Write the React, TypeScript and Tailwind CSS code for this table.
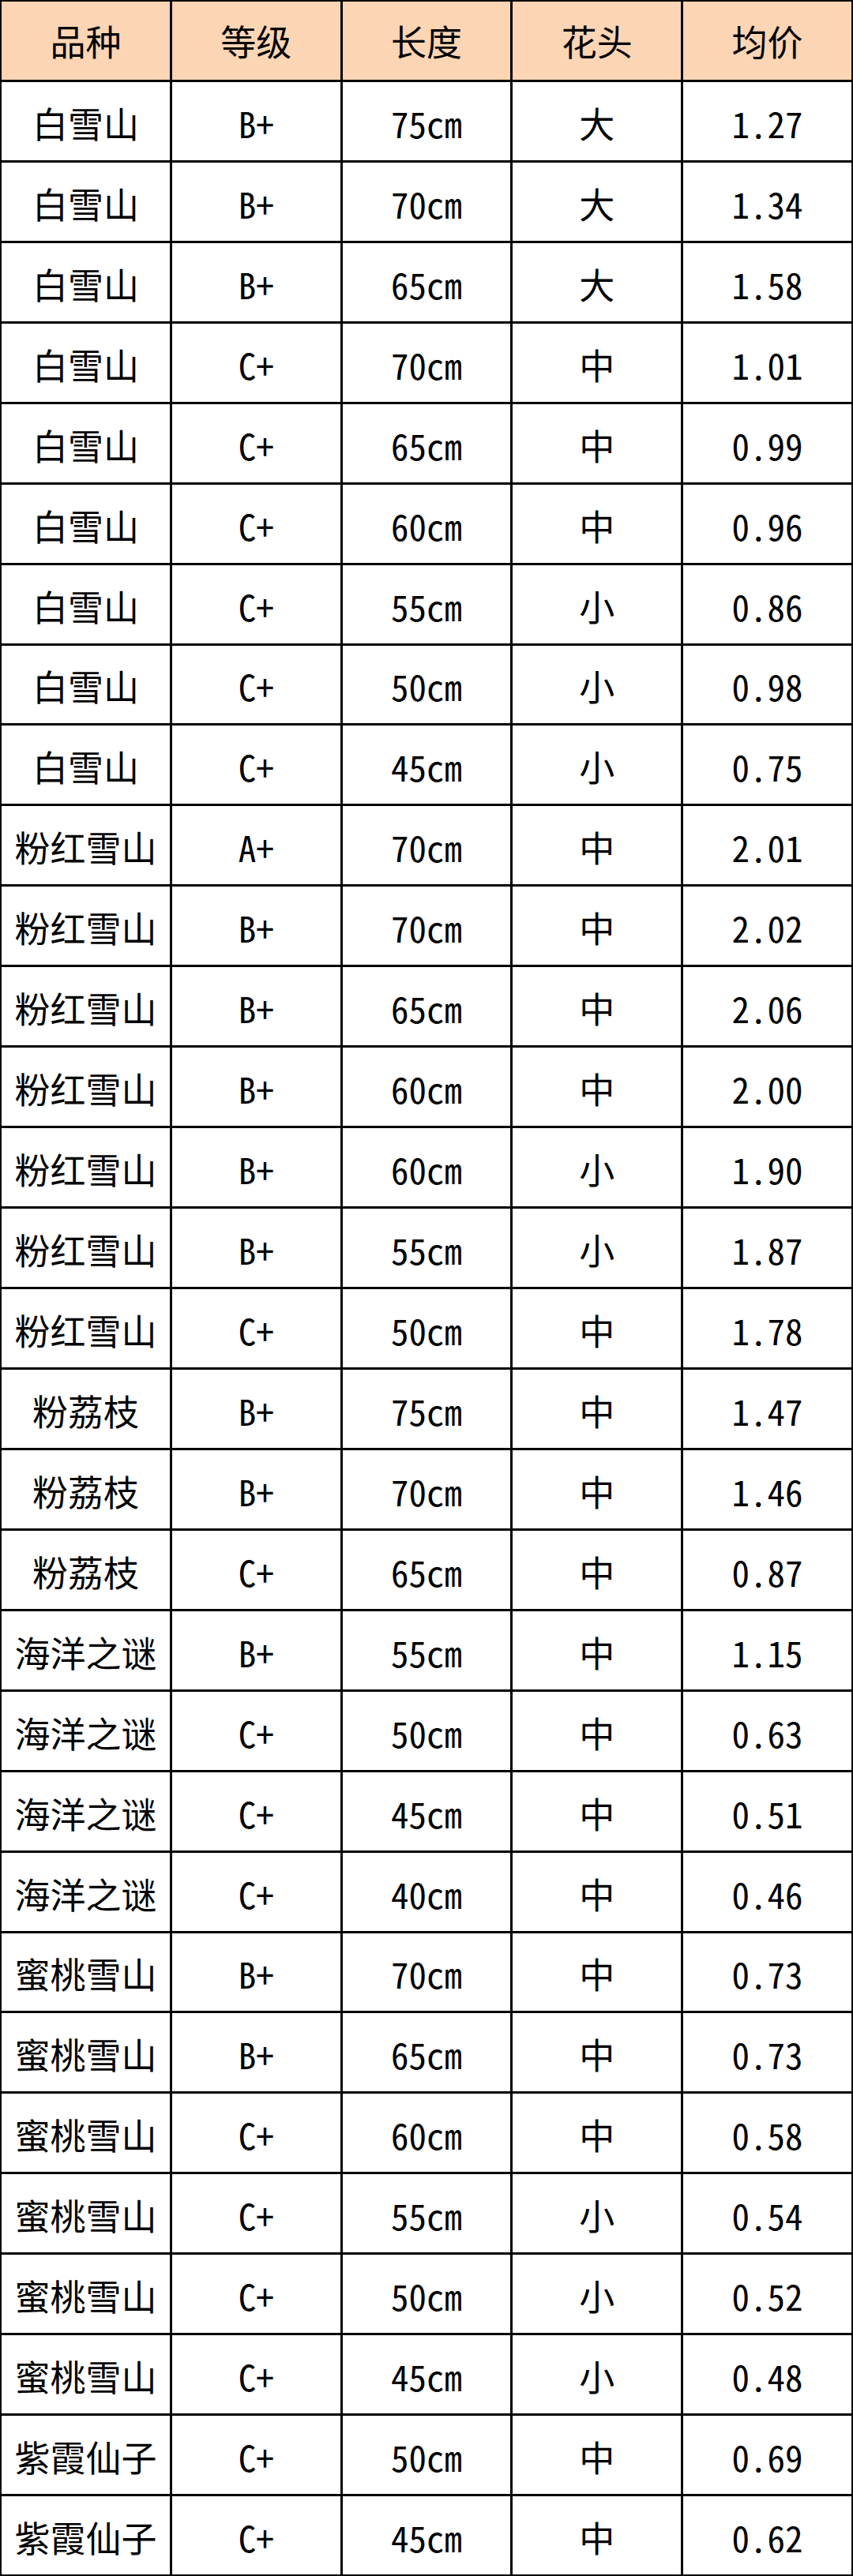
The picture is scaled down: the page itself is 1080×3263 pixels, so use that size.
import React from "react";

const rows: [string, string, string, string, string][] = [
  ["白雪山", "B+", "75cm", "大", "1.27"],
  ["白雪山", "B+", "70cm", "大", "1.34"],
  ["白雪山", "B+", "65cm", "大", "1.58"],
  ["白雪山", "C+", "70cm", "中", "1.01"],
  ["白雪山", "C+", "65cm", "中", "0.99"],
  ["白雪山", "C+", "60cm", "中", "0.96"],
  ["白雪山", "C+", "55cm", "小", "0.86"],
  ["白雪山", "C+", "50cm", "小", "0.98"],
  ["白雪山", "C+", "45cm", "小", "0.75"],
  ["粉红雪山", "A+", "70cm", "中", "2.01"],
  ["粉红雪山", "B+", "70cm", "中", "2.02"],
  ["粉红雪山", "B+", "65cm", "中", "2.06"],
  ["粉红雪山", "B+", "60cm", "中", "2.00"],
  ["粉红雪山", "B+", "60cm", "小", "1.90"],
  ["粉红雪山", "B+", "55cm", "小", "1.87"],
  ["粉红雪山", "C+", "50cm", "中", "1.78"],
  ["粉荔枝", "B+", "75cm", "中", "1.47"],
  ["粉荔枝", "B+", "70cm", "中", "1.46"],
  ["粉荔枝", "C+", "65cm", "中", "0.87"],
  ["海洋之谜", "B+", "55cm", "中", "1.15"],
  ["海洋之谜", "C+", "50cm", "中", "0.63"],
  ["海洋之谜", "C+", "45cm", "中", "0.51"],
  ["海洋之谜", "C+", "40cm", "中", "0.46"],
  ["蜜桃雪山", "B+", "70cm", "中", "0.73"],
  ["蜜桃雪山", "B+", "65cm", "中", "0.73"],
  ["蜜桃雪山", "C+", "60cm", "中", "0.58"],
  ["蜜桃雪山", "C+", "55cm", "小", "0.54"],
  ["蜜桃雪山", "C+", "50cm", "小", "0.52"],
  ["蜜桃雪山", "C+", "45cm", "小", "0.48"],
  ["紫霞仙子", "C+", "50cm", "中", "0.69"],
  ["紫霞仙子", "C+", "45cm", "中", "0.62"],
];

const header = ["品种", "等级", "长度", "花头", "均价"];

export default function App() {
  return (
    <div
      className="w-[1080px] h-[3263px] bg-black p-[2px] grid grid-cols-5 grid-rows-[repeat(32,minmax(0,1fr))] gap-[3px] text-black text-[45px] leading-none"
      style={{ fontFamily: '"Noto Sans Mono CJK SC", "Noto Sans CJK SC", "DejaVu Sans Mono", monospace' }}
    >
      {header.map((h, i) => (
        <div key={"h" + i} className="bg-[#fcd5b4] flex items-center justify-center">
          {h}
        </div>
      ))}
      {rows.map((r, ri) =>
        r.map((c, ci) => (
          <div key={ri + "-" + ci} className="bg-white flex items-center justify-center pt-[4px]">
            {c}
          </div>
        ))
      )}
    </div>
  );
}
